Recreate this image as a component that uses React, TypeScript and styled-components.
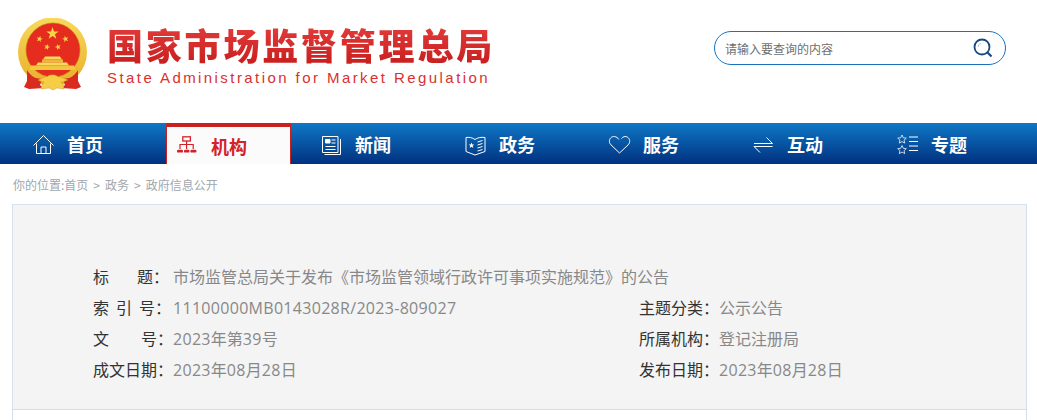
import styled, { createGlobalStyle } from "styled-components";
import type { ReactNode } from "react";

const GlobalStyle = createGlobalStyle`
  html, body {
    margin: 0;
    padding: 0;
    height: 420px;
    overflow: hidden;
    background: #fff;
    font-family: "Noto Sans CJK SC", "Noto Sans", sans-serif;
  }
`;

const Header = styled.header`
  height: 123px;
  display: flex;
  align-items: flex-start;
  box-sizing: border-box;
  padding: 18px 31px 0 18px;
`;

const Emblem = styled.svg`
  width: 71px;
  height: 75px;
  flex: none;
`;

const Brand = styled.div`
  margin-left: 18px;
  padding-top: 5px;
  flex: 1;
`;

const BrandTitle = styled.div`
  font-size: 36px;
  line-height: 42px;
  font-weight: 900;
  letter-spacing: 2.8px;
  white-space: nowrap;
  background: linear-gradient(#e43d3c, #c81e1e);
  -webkit-background-clip: text;
  background-clip: text;
  color: transparent;
`;

const BrandSub = styled.div`
  margin-top: 3px;
  font-family: "Liberation Sans", sans-serif;
  font-size: 15px;
  line-height: 20px;
  letter-spacing: 2.43px;
  color: #d9312f;
  white-space: nowrap;
`;

const SearchBox = styled.div`
  margin-top: 13px;
  width: 292px;
  height: 34px;
  box-sizing: border-box;
  border: 1px solid #1a72bd;
  border-radius: 17px;
  display: flex;
  align-items: center;
  justify-content: space-between;
  padding: 0 12px 0 10px;
  font-size: 12px;
  color: #6f6f6f;
`;

const Nav = styled.nav`
  height: 41px;
  display: flex;
  padding-left: 22px;
  gap: 19px;
  background: linear-gradient(#0f78c6, #00317f);
`;

const NavItem = styled.div<{ $active?: boolean }>`
  width: 125px;
  height: 41px;
  box-sizing: border-box;
  display: flex;
  align-items: center;
  gap: 11px;
  padding-left: 9px;
  font-size: 18px;
  font-weight: 700;
  color: ${(p) => (p.$active ? "#d2222a" : "#fff")};
  background: ${(p) => (p.$active ? "#fbfbfb" : "transparent")};
  border: ${(p) => (p.$active ? "1px solid #c9211f" : "1px solid transparent")};
  border-top: ${(p) => (p.$active ? "4px solid #c9211f" : "1px solid transparent")};
  border-bottom: none;
`;

const NavIcon = styled.svg`
  width: 24px;
  height: 23px;
  flex: none;
  fill: none;
  stroke: currentColor;
`;

const Crumbs = styled.div`
  height: 40px;
  box-sizing: border-box;
  padding: 11px 0 0 13px;
  font-size: 12px;
  line-height: 20px;
  color: #a0a7ae;
`;

const CrumbSep = styled.span`
  margin: 0 5px;
`;

const Panel = styled.section`
  margin: 0 10px 0 12px;
  height: 216px;
  border: 1px solid #d5e1ec;
  border-bottom: none;
`;

const Meta = styled.div`
  background: #f4f4f4;
  border-bottom: 1px solid #d5dde6;
  box-sizing: border-box;
  height: 205px;
  padding: 55px 0 0 80px;
  display: grid;
  grid-template-columns: 546px 1fr;
  grid-auto-rows: 31px;
  font-size: 16px;
`;

const Field = styled.div<{ $wide?: boolean }>`
  display: flex;
  align-items: center;
  grid-column: ${(p) => (p.$wide ? "1 / -1" : "auto")};
  white-space: nowrap;
`;

const Label = styled.span`
  width: 80px;
  flex: none;
  display: flex;
  color: #333;
`;

const LabelText = styled.span<{ $width: number }>`
  width: ${(p) => p.$width}px;
  display: flex;
  justify-content: space-between;
`;

const Value = styled.span`
  color: #888;
`;

const Latin = styled.span`
  font-family: "Open Sans", sans-serif;
  letter-spacing: 0.3px;
`;

const NAV_ICONS: Record<string, ReactNode> = {
  home: (
    <>
      <path d="M1.500 12.500 11.500 2.500l10 10" />
      <path d="M4.500 10.500v10h14v-10" />
      <path d="M9 20.500v-6.500h5v6.500" />
    </>
  ),
  org: (
    <>
      <rect x="6.800" y="2.800" width="7.600" height="4.200" strokeWidth="1.300" />
      <path d="M10.600 7v8M4 15v-4.500h13.200V15" strokeWidth="1.200" />
      <g fill="currentColor" stroke="none">
        <rect x="1" y="15.800" width="6" height="2.800" rx="1.200" />
        <rect x="8" y="15.800" width="5.400" height="2.800" rx="1.200" />
        <rect x="14.400" y="15.800" width="6" height="2.800" rx="1.200" />
      </g>
    </>
  ),
  news: (
    <>
      <path d="M2.500 3.500h15.500v16H2.500z" />
      <path d="M20.500 6v15.500H4.500" />
      <path d="M5.500 6.500h4.500v3.500H5.500z" fill="currentColor" />
      <path d="M11.500 7h4M11.500 10h4M5.500 13.500h10M5.500 16.500h10" />
    </>
  ),
  policy: (
    <>
      <path d="M2 4.500c3-.5 6 0 9 2 3-2 6-2.500 10-2v14l-10 3.500L2 18.500z" />
      <path d="m7.500 9.500.8 2h2l-1.600 1.300.6 2.200-1.800-1.300-1.800 1.300.6-2.200L4.700 11.500h2z" fill="currentColor" stroke="none" />
      <path d="M13.500 9l5-1.500M13.500 12l5-1.500M13.500 15l5-1.500M13.500 18l5-1.500" />
    </>
  ),
  heart: (
    <path d="M13.500 5.500C15.500 3 18.500 3 20.300 4.800c2 2.100 1.800 5-.2 7.100L11.500 20 3 11.900c-2-2.100-2.200-5-.2-7.100C4.800 2.800 8.500 3 11 6.500" />
  ),
  swap: (
    <>
      <path d="M2 10.500h18.500L14.500 4.500" />
      <path d="M20.500 13.500H2l6 6" />
    </>
  ),
  topic: (
    <>
      <path d="m6 2 1.300 2.800 3 .3-2.200 2 .6 3-2.700-1.500-2.700 1.500.6-3-2.200-2 3-.3z" opacity=".75" />
      <path d="m6 12.500 1.300 2.800 3 .3-2.200 2 .6 3-2.700-1.500-2.700 1.500.6-3-2.200-2 3-.3z" opacity=".75" />
      <path d="M13 4h9M13 8.500h9M13 13h9M13 17.500h9" />
    </>
  ),
};

const NAV_ITEMS = [
  { key: "home", label: "首页" },
  { key: "org", label: "机构", active: true },
  { key: "news", label: "新闻" },
  { key: "policy", label: "政务" },
  { key: "heart", label: "服务" },
  { key: "swap", label: "互动" },
  { key: "topic", label: "专题" },
];

const Star = ({ x, y, r, rotate = 0 }: { x: number; y: number; r: number; rotate?: number }) => {
  const points = Array.from({ length: 10 }, (_, i) => {
    const radius = i % 2 === 0 ? r : r * 0.4;
    const angle = (Math.PI / 5) * i - Math.PI / 2;
    return `${(radius * Math.cos(angle)).toFixed(2)},${(radius * Math.sin(angle)).toFixed(2)}`;
  }).join(" ");
  return <polygon points={points} fill="#f8d34a" transform={`translate(${x} ${y}) rotate(${rotate})`} />;
};

const EmblemMark = () => (
  <Emblem viewBox="0 0 71 75">
    <defs>
      <linearGradient id="ring" x1="0" y1="0" x2="0" y2="1">
        <stop offset="0" stopColor="#f8d95c" />
        <stop offset="1" stopColor="#e8ae28" />
      </linearGradient>
    </defs>
    <circle cx="34.500" cy="34" r="34.500" fill="url(#ring)" />
    <circle cx="35" cy="32" r="27" fill="#e52c1f" stroke="#b9871a" strokeWidth=".6" />
    <Star x={34.500} y={15.500} r={6.500} />
    <Star x={21.500} y={21} r={3.400} rotate={15} />
    <Star x={47.500} y={21} r={3.400} rotate={-15} />
    <Star x={29} y={29} r={3.200} rotate={20} />
    <Star x={40} y={29} r={3.200} rotate={-20} />
    <path d="M27 38.500h15l2 3H25z" fill="#f9d85c" />
    <path d="M24 41.500h21v3H24z" fill="#eeb93a" />
    <path d="M20 44.500h29l2 3H18z" fill="#f9d85c" />
    <path d="M13 47.500h43l1.500 4.500h-46z" fill="#f3c63f" />
    <path d="M9 52c2 3 5 7 9 8l6 1-2 6 4 3-15 1-5-2 3-6z" fill="#d92b1f" />
    <path d="M60 52c-2 3-5 7-9 8l-6 1 2 6-4 3 15 1 5-2-3-6z" fill="#d92b1f" />
    <path d="M20 62c4-1 6-4 9-3 2-3 9-3 11 0 3-1 6 2 10 3-3 1-5 2-7 2 2 2 3 4 3 7l-7-1-4 2-4-2-8 1c0-3 2-5 3-7-2 0-4-1-6-2z" fill="#f6cd45" stroke="#c5901f" strokeWidth=".4" />
  </Emblem>
);

// digits and latin letters sit in a slightly wider face than the CJK text
const withLatin = (text: string) =>
  text.split(/([A-Za-z0-9/-]+)/).map((part, i) => (i % 2 === 1 ? <Latin key={i}>{part}</Latin> : part));

const Row = ({ label, width, value, wide }: { label: string[]; width: number; value: string; wide?: boolean }) => (
  <Field $wide={wide}>
    <Label>
      <LabelText $width={width}>
        {label.map((ch) => (
          <span key={ch}>{ch}</span>
        ))}
      </LabelText>
      <span>：</span>
    </Label>
    <Value>{withLatin(value)}</Value>
  </Field>
);

const App = () => {
  return (
    <>
      <GlobalStyle />
      <Header>
        <EmblemMark />
        <Brand>
          <BrandTitle>国家市场监督管理总局</BrandTitle>
          <BrandSub>State Administration for Market Regulation</BrandSub>
        </Brand>
        <SearchBox>
          <span>请输入要查询的内容</span>
          <svg width="20" height="20" viewBox="0 0 20 20" fill="none">
            <circle cx="9" cy="9" r="7.500" stroke="#17477f" strokeWidth="1.800" />
            <path d="M14.500 14.500 18.500 18.500" stroke="#17477f" strokeWidth="2.200" />
            <path d="M5 9a4 4 0 0 1 3-3.500" stroke="#a9c3dc" strokeWidth="1" />
          </svg>
        </SearchBox>
      </Header>
      <Nav>
        {NAV_ITEMS.map((item) => (
          <NavItem key={item.key} $active={item.active}>
            <NavIcon viewBox="0 0 24 23">{NAV_ICONS[item.key]}</NavIcon>
            {item.label}
          </NavItem>
        ))}
      </Nav>
      <Crumbs>
        你的位置:首页<CrumbSep>&gt;</CrumbSep>政务<CrumbSep>&gt;</CrumbSep>政府信息公开
      </Crumbs>
      <Panel>
        <Meta>
          <Row wide label={["标", "题"]} width={60} value="市场监管总局关于发布《市场监管领域行政许可事项实施规范》的公告" />
          <Row label={["索", "引", "号"]} width={62} value="11100000MB0143028R/2023-809027" />
          <Row label={["主", "题", "分", "类"]} width={64} value="公示公告" />
          <Row label={["文", "号"]} width={64} value="2023年第39号" />
          <Row label={["所", "属", "机", "构"]} width={64} value="登记注册局" />
          <Row label={["成", "文", "日", "期"]} width={64} value="2023年08月28日" />
          <Row label={["发", "布", "日", "期"]} width={64} value="2023年08月28日" />
        </Meta>
      </Panel>
    </>
  );
};

export default App;
